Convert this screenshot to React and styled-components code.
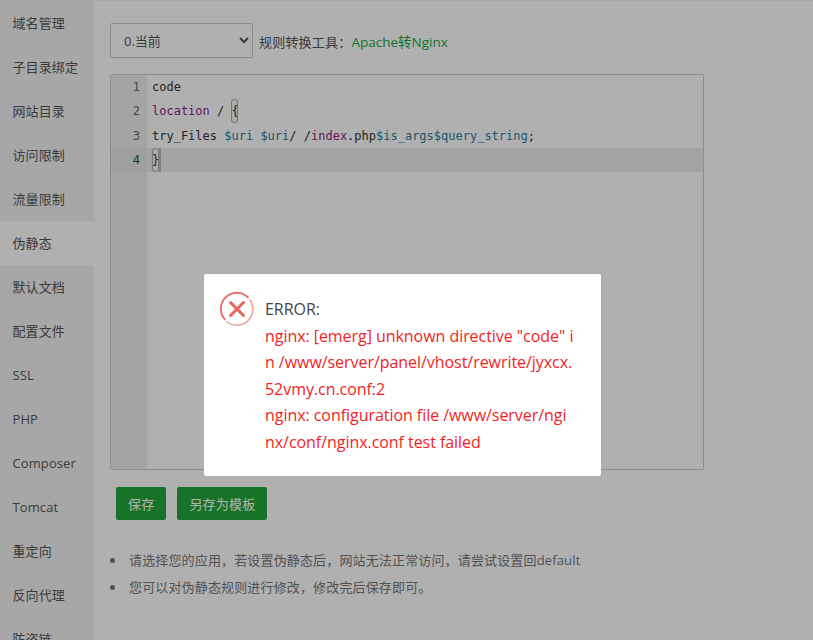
import React from 'react';
import styled, { createGlobalStyle } from 'styled-components';

const Global = createGlobalStyle`
  html, body { margin: 0; padding: 0; height: 640px; overflow: hidden; background: #fff; }
  * { box-sizing: border-box; }
`;
const SANS = '"Open Sans", "Noto Sans CJK SC", sans-serif';
const Page = styled.div`
  display: flex; width: 813px; height: 640px; overflow: hidden;
  font-family: ${SANS}; color: #555; font-size: 13px; background: #fcfcfc;
  border-top: 1px solid #f0f0f0;
`;
const Sidebar = styled.nav`
  width: 94px; flex: none; background: #f0f0f0; display: flex; flex-direction: column;
`;
const NavItem = styled.div`
  height: 44px; flex: none; line-height: 44px; padding-left: 12.5px; font-size: 13px; letter-spacing: .1px; color: #555;
  background: ${p => (p.$active ? '#fcfcfc' : 'transparent')};
`;
const Main = styled.main`
  flex: 1; padding: 22px 0 0 16px; display: flex; flex-direction: column; align-items: flex-start;
`;
const Toolbar = styled.div`
  display: flex; align-items: center; gap: 6px; height: 35px;
`;
const Select = styled.select`
  width: 143px; height: 35px; padding-left: 9px; border: 1px solid #ccc; border-radius: 2px;
  background: #fcfcfc; font: 13px ${SANS}; color: #555;
`;
const Hint = styled.span` font-size: 13px; letter-spacing: .2px; color: #555; `;
const GreenLink = styled.a` color: #20a53a; font-size: 13.5px; letter-spacing: 0; `;
const Editor = styled.div`
  margin-top: 16px; width: 594px; height: 396px; border: 1px solid #ccc; border-radius: 2px;
  display: flex; overflow: hidden; font: 12px/24.33px "DejaVu Sans Mono", monospace; color: #333;
`;
const Gutter = styled.div`
  width: 36px; flex: none; background: #ebebeb; color: #666; text-align: right;
`;
const LineNo = styled.div`
  height: 24.33px; padding-right: 7px;
  ${p => p.$active && 'background: #e4e4e4; color: #26505f;'}
`;
const Code = styled.div` flex: 1; white-space: pre; `;
const Line = styled.div`
  height: 24.33px; padding-left: 5px;
  ${p => p.$active && 'background: #ebebeb;'}
`;
const Kw = styled.span` color: #8f1f80; `;
const Var = styled.span` color: #2b7f96; `;
const Match = styled.span`
  display: inline-block; height: 24px; line-height: 22px; border: 1px solid #aaa; border-radius: 3px;
  width: 7px; text-indent: -1px; overflow: hidden; vertical-align: top; background: #f4f4f4;
`;
const Cursor = styled.span` display: inline-block; width: 2px; height: 24px; vertical-align: top; background: #bbb; `;
const Actions = styled.div` display: flex; gap: 11px; margin: 17px 0 0 6px; `;
const Btn = styled.button`
  height: 33px; padding: 0 12px; border: 0; border-radius: 2px; background: #20a53a; color: #fff;
  font: 13px ${SANS}; letter-spacing: .2px;
`;
const Notes = styled.ul`
  margin: 27px 0 0; padding: 0; list-style: none; font-size: 13px; line-height: 27px; letter-spacing: .15px; color: #777;
`;
const Note = styled.li`
  display: flex; align-items: center; gap: 14px;
  &::before { content: ''; width: 5px; height: 5px; border-radius: 50%; background: #777; }
`;
const Shade = styled.div`
  position: absolute; inset: 0; width: 813px; height: 640px; background: rgba(0,0,0,.3);
`;
const Dialog = styled.div`
  position: absolute; left: 204px; top: 274px; width: 397px; height: 202px; background: #fff;
  border-radius: 2px; display: flex; align-items: flex-start; padding: 18px 0 0 16px;
  font: 16px/26.5px ${SANS};
`;
const Icon = styled.svg` width: 34px; height: 34px; flex: none; `;
const Message = styled.div` margin: 4px 0 0 11px; width: 309.3px; word-break: break-all; letter-spacing: -.05px; color: #444; `;
const Err = styled.div` color: #f41e24; `;

const items = ['域名管理','子目录绑定','网站目录','访问限制','流量限制','伪静态','默认文档','配置文件','SSL','PHP','Composer','Tomcat','重定向','反向代理','防盗链'];

export default function App() {
  return (
    <>
      <Global />
      <Page>
        <Sidebar>
          {items.map(t => <NavItem key={t} $active={t === '伪静态'}>{t}</NavItem>)}
        </Sidebar>
        <Main>
          <Toolbar>
            <Select defaultValue="0"><option value="0">0.当前</option></Select>
            <Hint>规则转换工具：<GreenLink>Apache转Nginx</GreenLink></Hint>
          </Toolbar>
          <Editor>
            <Gutter>
              <LineNo>1</LineNo><LineNo>2</LineNo><LineNo>3</LineNo><LineNo $active>4</LineNo>
            </Gutter>
            <Code>
              <Line>code</Line>
              <Line><Kw>location</Kw> / <Match>{'{'}</Match></Line>
              <Line>try_Files <Var>$uri</Var> <Var>$uri</Var>/ /<Kw>index</Kw>.php<Var>$is_args$query_string</Var>;</Line>
              <Line $active><Match>{'}'}</Match><Cursor /></Line>
            </Code>
          </Editor>
          <Actions>
            <Btn>保存</Btn>
            <Btn>另存为模板</Btn>
          </Actions>
          <Notes>
            <Note>请选择您的应用，若设置伪静态后，网站无法正常访问，请尝试设置回default</Note>
            <Note>您可以对伪静态规则进行修改，修改完后保存即可。</Note>
          </Notes>
        </Main>
      </Page>
      <Shade />
      <Dialog>
        <Icon viewBox="0 0 34 34" fill="none">
          <path d="M28.5 5.8A16 16 0 0 0 5.2 27.8" stroke="#ea6a62" strokeWidth="1.8" />
          <path d="M6.5 29.5a16 16 0 0 0 23-2.5A16 16 0 0 0 29.6 7.5" stroke="#f2a19b" strokeWidth="1.5" />
          <path d="M10.5 10.5l13 13M23.5 10.5l-13 13" stroke="#e8645b" strokeWidth="3" strokeLinecap="round" />
        </Icon>
        <Message>
          ERROR:
          <Err>nginx: [emerg] unknown directive "code" in /www/server/panel/vhost/rewrite/jyxcx.52vmy.cn.conf:2</Err>
          <Err>nginx: configuration file /www/server/nginx/conf/nginx.conf test failed</Err>
        </Message>
      </Dialog>
    </>
  );
}
